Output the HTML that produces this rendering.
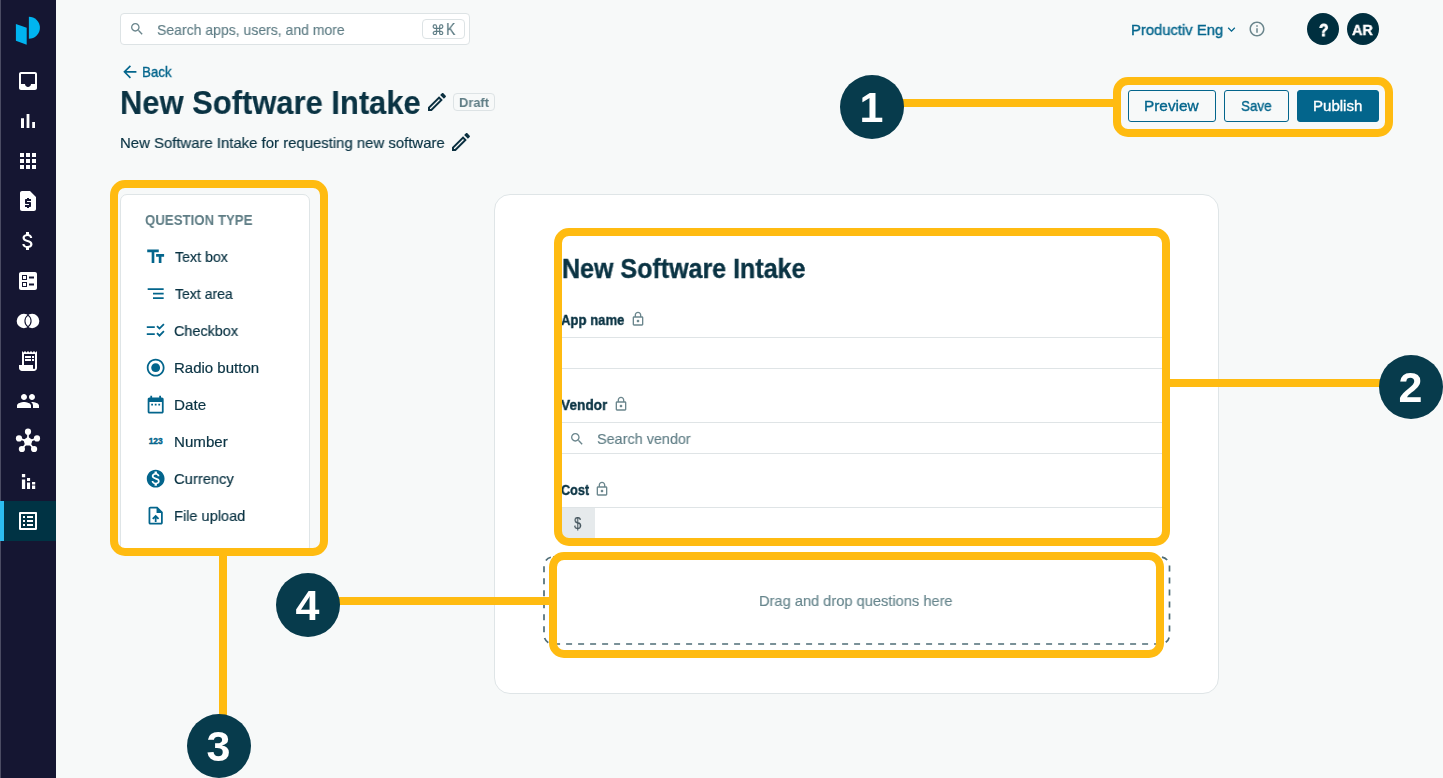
<!DOCTYPE html>
<html lang="en">
<head>
<meta charset="utf-8">
<title>New Software Intake</title>
<style>
*{box-sizing:border-box;margin:0;padding:0}
html,body{width:1443px;height:778px;overflow:hidden}
body{background:#f7f9f9;font-family:"Liberation Sans","DejaVu Sans",sans-serif;color:#0b3040;position:relative}
.abs{position:absolute}
svg{display:block}
/* sidebar */
#side{position:absolute;left:0;top:0;width:56px;height:778px;background:#151632}
#side .edge{position:absolute;left:0;top:0;width:1px;height:778px;background:#4b4c63}
#side .active{position:absolute;left:0;top:501px;width:56px;height:40px;background:#003344}
#side .active i{position:absolute;left:0;top:0;width:4px;height:40px;background:#2cbdf0}
#side svg{position:absolute;left:16px;width:24px;height:24px;fill:#fff}
/* text */
.t{position:absolute;white-space:nowrap;line-height:1;transform-origin:0 0;will-change:transform}
/* yellow */
.yb{position:absolute;border:8px solid #ffbb11;border-radius:15px}
.yl{position:absolute;background:#ffbb11}
.num{position:absolute;width:64px;height:64px;border-radius:50%;background:#073b4c;color:#fff;font-weight:bold;font-size:43px;text-align:center;line-height:64.5px;text-indent:-1px;will-change:transform}
.btn{position:absolute;top:90px;height:32px;border:1px solid #03658c;border-radius:3px;background:transparent;color:#03658c;font-size:15px;text-align:center;line-height:30px}
.qi{position:absolute;left:144.7px;width:21.33px;height:21.33px;fill:#03658c}
.ql{position:absolute;left:174px;font-size:15px;color:#0b3040;white-space:nowrap;line-height:1}
.lbl{position:absolute;left:561px;font-size:14px;font-weight:bold;color:#0b3040;white-space:nowrap;line-height:1}
.inp{position:absolute;left:561px;width:604px;height:32px;border:1px solid #dfe4e6;background:#fff}
.lock{position:absolute;width:16px;height:16px;fill:#6b868d}
</style>
</head>
<body>

<!-- SIDEBAR -->
<div id="side">
  <div class="edge"></div>
  <div class="active"><i></i></div>
  <svg viewBox="0 0 56 56" style="left:0;top:0;width:56px;height:56px;fill:#00b4f0"><path d="M15.900 24L26.700 27.800V44.800L15.900 40.800z"/><path d="M28.900 16.800A11 11 0 0 1 28.900 38.800z"/></svg>
  <svg viewBox="0 0 24 24" style="top:69px"><path d="M19 3H4.99c-1.11 0-1.98.89-1.98 2L3 19c0 1.1.88 2 1.99 2H19c1.1 0 2-.9 2-2V5c0-1.11-.9-2-2-2zm0 12h-4c0 1.66-1.35 3-3 3s-3-1.34-3-3H4.99V5H19v10z"/></svg>
  <svg viewBox="0 0 24 24" style="top:109px"><path d="M5 9.2h3V19H5zM10.6 5h2.8v14h-2.8zm5.6 8H19v6h-2.8z"/></svg>
  <svg viewBox="0 0 24 24" style="top:149px"><path d="M4 8h4V4H4v4zm6 12h4v-4h-4v4zm-6 0h4v-4H4v4zm0-6h4v-4H4v4zm6 0h4v-4h-4v4zm6-10v4h4V4h-4zm-6 4h4V4h-4v4zm6 6h4v-4h-4v4zm0 6h4v-4h-4v4z"/></svg>
  <svg viewBox="0 0 24 24" style="top:189px"><path d="M14 2H6c-1.1 0-2 .9-2 2v16c0 1.1.9 2 2 2h12c1.1 0 2-.9 2-2V8l-6-6zm1 10h-4v1h3c.55 0 1 .45 1 1v3c0 .55-.45 1-1 1h-1v1h-2v-1H9v-2h4v-1h-3c-.55 0-1-.45-1-1v-3c0-.55.45-1 1-1h1V9h2v1h2v2z"/></svg>
  <svg viewBox="0 0 24 24" style="top:229px"><path d="M11.8 10.9c-2.27-.59-3-1.2-3-2.15 0-1.09 1.01-1.85 2.7-1.85 1.78 0 2.44.85 2.5 2.1h2.21c-.07-1.72-1.12-3.3-3.21-3.81V3h-3v2.16c-1.94.42-3.5 1.68-3.5 3.61 0 2.31 1.91 3.46 4.7 4.13 2.5.6 3 1.48 3 2.41 0 .69-.49 1.79-2.7 1.79-2.06 0-2.87-.92-2.98-2.1h-2.2c.12 2.19 1.76 3.42 3.68 3.83V21h3v-2.15c1.95-.37 3.5-1.5 3.5-3.55 0-2.84-2.43-3.81-4.7-4.4z"/></svg>
  <svg viewBox="0 0 24 24" style="top:269px"><path fill-rule="evenodd" d="M13 9.5h5v-2h-5v2zm0 7h5v-2h-5v2zm6 4.500H5c-1.1 0-2-.9-2-2V5c0-1.1.9-2 2-2h14c1.100 0 2 .9 2 2v14c0 1.100-.9 2-2 2zM6 11h5V6H6v5zm1-4h3v3H7V7zM6 18h5v-5H6v5zm1-4h3v3H7v-3z"/></svg>
  <svg viewBox="0 0 24 24" style="top:309px;overflow:visible"><circle cx="7.900" cy="12" r="7.200"/><circle cx="16.100" cy="12" r="7.200"/><path d="M12 6.100a7.200 7.200 0 0 1 0 11.800a7.200 7.200 0 0 1 0-11.800z" fill="#fff" stroke="#151632" stroke-width="1.100"/></svg>
  <svg viewBox="0 0 24 24" style="top:349px;overflow:visible"><path fill-rule="evenodd" d="M19.500 3.500L18 2l-1.500 1.500L15 2l-1.500 1.500L12 2l-1.500 1.500L9 2 7.500 3.500 6 2v14H3v3c0 1.660 1.340 3 3 3h12c1.660 0 3-1.340 3-3V2l-1.500 1.500zM19 19c0 .550-.450 1-1 1s-1-.450-1-1v-3H8V5h11v14zM9 7h6v2H9zM16 7h2v2h-2zM9 10h6v2H9zM16 10h2v2h-2z"/></svg>
  <svg viewBox="0 0 24 24" style="top:389px"><path d="M16 11c1.660 0 2.990-1.340 2.990-3S17.660 5 16 5c-1.660 0-3 1.340-3 3s1.340 3 3 3zm-8 0c1.660 0 2.990-1.340 2.990-3S9.660 5 8 5C6.340 5 5 6.340 5 8s1.340 3 3 3zm0 2c-2.330 0-7 1.170-7 3.500V19h14v-2.500c0-2.330-4.670-3.500-7-3.500zm8 0c-.29 0-.62.020-.97.050 1.160.840 1.970 1.970 1.970 3.450V19h6v-2.500c0-2.330-4.670-3.500-7-3.500z"/></svg>
  <svg viewBox="0 0 24 24" style="top:429px;overflow:visible"><path d="M12 12.500V2.700M12 12.500L3 9.400M12 12.500l9-3.100M12 12.500L5.900 20M12 12.500l5.900 7.500" stroke="#fff" stroke-width="1.700" fill="none"/><path d="M12 7.700l4.600 3.300-1.800 5.400H9.200L7.400 11z"/><circle cx="12" cy="2.700" r="3.100"/><circle cx="3" cy="9.400" r="3.100"/><circle cx="21" cy="9.400" r="3.100"/><circle cx="5.900" cy="20" r="3.100"/><circle cx="18.100" cy="20" r="3.100"/></svg>
  <svg viewBox="0 0 24 24" style="top:469px;overflow:visible"><path d="M5.900 5h3.300v3.300H5.900zM5.900 10.600h3.300V20H5.900zM11 9h3.100v3H11zM11 13.400h3.100V20H11zM16 13h3.200v2.500H16zM16 16.600h3.200V20H16z"/></svg>
  <svg viewBox="0 0 24 24" style="top:509px"><path d="M19 5v14H5V5h14m1.100-2H3.900c-.5 0-.9.400-.9.900v16.200c0 .4.400.9.900.9h16.200c.4 0 .9-.5.900-.9V3.900c0-.5-.5-.9-.9-.9zM11 7h6v2h-6V7zm0 4h6v2h-6v-2zm0 4h6v2h-6zM7 7h2v2H7zm0 4h2v2H7zm0 4h2v2H7z"/></svg>
</div>

<!-- TOP BAR -->
<div class="abs" style="left:120px;top:13px;width:350px;height:32px;border:1px solid #dde3e5;border-radius:4px;background:#fff"></div>
<div class="abs" style="left:422px;top:19px;width:43px;height:20px;border:1px solid #dde3e5;border-radius:4px;background:#fff"></div>

<div class="abs" style="left:1307px;top:13px;width:32px;height:32px;border-radius:50%;background:#002f3f"></div>
<div class="abs" style="left:1347px;top:13px;width:32px;height:32px;border-radius:50%;background:#002f3f"></div>

<!-- HEADER -->
<div class="abs" style="left:453px;top:93px;width:42px;height:18px;border:1px solid #dde3e5;border-radius:4px"></div>

<!-- BUTTONS -->
<div class="btn" style="left:1128px;width:88px"></div>
<div class="btn" style="left:1224px;width:65px"></div>
<div class="btn" style="left:1297px;width:82px;background:#03658c;color:#fff"></div>

<!-- QUESTION TYPE CARD -->
<div class="abs" style="left:120px;top:194px;width:190px;height:360px;border:1px solid #dfe5e7;border-radius:7px;background:#fff"></div>

<svg class="qi" viewBox="0 0 24 24" style="top:246px"><path d="M2.500 4v3h5v12h3V7h5V4h-13zm19 5h-9v3h3v7h3v-7h3V9z"/></svg>
<svg class="qi" viewBox="0 0 24 24" style="top:283px"><path d="M9 18h12v-2H9v2zM3 6v2h18V6H3zm6 7h12v-2H9v2z"/></svg>
<svg class="qi" viewBox="0 0 24 24" style="top:320px"><path d="M11 7H2v2h9V7zm0 8H2v2h9v-2zm5.340-4L12.800 7.460l1.410-1.410 2.120 2.120 4.240-4.240L22 5.340 16.340 11zm0 8l-3.540-3.540 1.410-1.410 2.120 2.120 4.240-4.240L22 13.340 16.340 19z"/></svg>
<svg class="qi" viewBox="0 0 24 24" style="top:357px"><path d="M12 7c-2.760 0-5 2.240-5 5s2.240 5 5 5 5-2.240 5-5-2.240-5-5-5zm0-5C6.480 2 2 6.480 2 12s4.480 10 10 10 10-4.480 10-10S17.520 2 12 2zm0 18c-4.420 0-8-3.580-8-8s3.580-8 8-8 8 3.580 8 8-3.580 8-8 8z"/></svg>
<svg class="qi" viewBox="0 0 24 24" style="top:394px"><path d="M9 11H7v2h2v-2zm4 0h-2v2h2v-2zm4 0h-2v2h2v-2zm2-7h-1V2h-2v2H8V2H6v2H5c-1.110 0-1.990.9-1.990 2L3 20c0 1.100.89 2 2 2h14c1.100 0 2-.9 2-2V6c0-1.100-.9-2-2-2zm0 16H5V9h14v11z"/></svg>
<svg class="qi" viewBox="0 0 24 24" style="top:431px"><text x="4.100" y="15.100" font-family="Liberation Sans, sans-serif" font-weight="bold" font-size="9.300" stroke="#03658c" stroke-width="0.450" textLength="15.800" lengthAdjust="spacingAndGlyphs">123</text></svg>
<svg class="qi" viewBox="0 0 24 24" style="top:468px"><path d="M12 2C6.480 2 2 6.480 2 12s4.480 10 10 10 10-4.480 10-10S17.520 2 12 2zm1.410 16.090V20h-2.670v-1.930c-1.710-.36-3.160-1.460-3.270-3.400h1.960c.1 1.050.82 1.870 2.650 1.870 1.960 0 2.400-.98 2.400-1.590 0-.83-.44-1.610-2.670-2.140-2.480-.6-4.180-1.620-4.180-3.670 0-1.720 1.390-2.840 3.110-3.210V4h2.670v1.950c1.860.45 2.790 1.860 2.850 3.390H14.300c-.05-1.110-.64-1.870-2.220-1.870-1.500 0-2.400.68-2.400 1.640 0 .84.650 1.390 2.670 1.910s4.180 1.390 4.180 3.910c-.010 1.830-1.380 2.830-3.120 3.160z"/></svg>
<svg class="qi" viewBox="0 0 24 24" style="top:505px"><path d="M14 2H6c-1.100 0-1.990.9-1.990 2L4 20c0 1.100.89 2 1.990 2H18c1.100 0 2-.9 2-2V8l-6-6zm4 18H6V4h7v5h5v11zM8 15.010l1.410 1.410L11 14.840V19h2v-4.160l1.590 1.590L16 15.010 12.010 11z"/></svg>

<!-- MAIN CARD -->
<div class="abs" style="left:494px;top:194px;width:725px;height:500px;border:1px solid #dfe5e7;border-radius:16px;background:#fff"></div>
<div class="inp" style="top:337px"></div>
<div class="inp" style="top:422px"></div>
<div class="inp" style="top:507px"></div>
<div class="abs" style="left:562px;top:508px;width:33px;height:30px;background:#e6eaec"></div>

<!-- DROP ZONE -->
<svg class="abs" style="left:540px;top:550px;width:636px;height:100px" viewBox="0 0 636 100"><rect x="4" y="7" width="625.500" height="87" rx="9" ry="9" fill="none" stroke="#4f6d77" stroke-width="1.700" stroke-dasharray="6 6" stroke-dashoffset="3"/></svg>

<!-- TEXTS -->
<div class="t" style="left:157.00px;top:22.00px;font-size:15px;color:#5f7d85;transform:scaleX(0.9342);-webkit-text-stroke:0.15px #5f7d85">Search apps, users, and more</div>
<div class="t" style="left:431.00px;top:23.20px;font-size:14px;color:#5f7d85;transform:scaleX(1.0000);-webkit-text-stroke:0.15px #5f7d85">⌘</div>
<div class="t" style="left:446.22px;top:21.90px;font-size:16px;color:#5f7d85;transform:scaleX(0.8800);-webkit-text-stroke:0.15px #5f7d85">K</div>
<div class="t" style="left:1130.61px;top:22.10px;font-size:15px;color:#03658c;transform:scaleX(0.9865);-webkit-text-stroke:0.35px #03658c">Productiv Eng</div>
<div class="t" style="left:1318.90px;top:21.70px;font-size:17px;color:#fff;transform:scaleX(0.9100);font-weight:bold;-webkit-text-stroke:0.8px #fff">?</div>
<div class="t" style="left:1352.40px;top:22.00px;font-size:15.4px;color:#fff;transform:scaleX(0.9406);font-weight:bold;-webkit-text-stroke:0.4px #fff">AR</div>
<div class="t" style="left:141.81px;top:64.20px;font-size:15px;color:#03658c;transform:scaleX(0.8920);-webkit-text-stroke:0.35px #03658c">Back</div>
<div class="t" style="left:119.63px;top:86.00px;font-size:33px;color:#0a3343;transform:scaleX(0.9370);font-weight:bold;-webkit-text-stroke:0.15px #0a3343">New Software Intake</div>
<div class="t" style="left:458.70px;top:96.00px;font-size:13.4px;color:#5f7d85;transform:scaleX(0.9595);font-weight:bold">Draft</div>
<div class="t" style="left:120.31px;top:134.90px;font-size:15px;color:#0a3343;transform:scaleX(0.9933);-webkit-text-stroke:0.2px #0a3343">New Software Intake for requesting new software</div>
<div class="t" style="left:1143.98px;top:98.20px;font-size:15px;color:#03658c;transform:scaleX(1.0244);-webkit-text-stroke:0.35px #03658c">Preview</div>
<div class="t" style="left:1240.70px;top:98.20px;font-size:15px;color:#03658c;transform:scaleX(0.8982);-webkit-text-stroke:0.35px #03658c">Save</div>
<div class="t" style="left:1312.50px;top:98.20px;font-size:15px;color:#fff;transform:scaleX(1.0030);-webkit-text-stroke:0.35px #fff">Publish</div>
<div class="t" style="left:145.20px;top:213.30px;font-size:14.4px;color:#5f7d85;transform:scaleX(0.9202);font-weight:bold">QUESTION TYPE</div>
<div class="t" style="left:174.70px;top:248.50px;font-size:15px;color:#0a3343;transform:scaleX(0.9474);-webkit-text-stroke:0.2px #0a3343">Text box</div>
<div class="t" style="left:174.70px;top:285.50px;font-size:15px;color:#0a3343;transform:scaleX(0.9365);-webkit-text-stroke:0.2px #0a3343">Text area</div>
<div class="t" style="left:174.20px;top:322.50px;font-size:15px;color:#0a3343;transform:scaleX(0.9598);-webkit-text-stroke:0.2px #0a3343">Checkbox</div>
<div class="t" style="left:173.90px;top:359.50px;font-size:15px;color:#0a3343;transform:scaleX(0.9986);-webkit-text-stroke:0.2px #0a3343">Radio button</div>
<div class="t" style="left:173.88px;top:396.50px;font-size:15px;color:#0a3343;transform:scaleX(1.0151);-webkit-text-stroke:0.2px #0a3343">Date</div>
<div class="t" style="left:173.89px;top:433.50px;font-size:15px;color:#0a3343;transform:scaleX(1.0066);-webkit-text-stroke:0.2px #0a3343">Number</div>
<div class="t" style="left:174.40px;top:470.50px;font-size:15px;color:#0a3343;transform:scaleX(0.9845);-webkit-text-stroke:0.2px #0a3343">Currency</div>
<div class="t" style="left:173.93px;top:507.50px;font-size:15px;color:#0a3343;transform:scaleX(0.9717);-webkit-text-stroke:0.2px #0a3343">File upload</div>
<div class="t" style="left:561.67px;top:255.80px;font-size:26.8px;color:#0a3343;transform:scaleX(0.9339);font-weight:bold;-webkit-text-stroke:0.4px #0a3343">New Software Intake</div>
<div class="t" style="left:560.50px;top:312.00px;font-size:15.4px;color:#0a3343;transform:scaleX(0.8525);font-weight:bold;-webkit-text-stroke:0.4px #0a3343">App name</div>
<div class="t" style="left:560.50px;top:397.00px;font-size:15.4px;color:#0a3343;transform:scaleX(0.8873);font-weight:bold;-webkit-text-stroke:0.4px #0a3343">Vendor</div>
<div class="t" style="left:560.70px;top:481.60px;font-size:15.4px;color:#0a3343;transform:scaleX(0.8246);font-weight:bold;-webkit-text-stroke:0.4px #0a3343">Cost</div>
<div class="t" style="left:597.10px;top:430.80px;font-size:15px;color:#5f7d85;transform:scaleX(0.9604);-webkit-text-stroke:0.15px #5f7d85">Search vendor</div>
<div class="t" style="left:573.80px;top:514.80px;font-size:17px;color:#46565e;transform:scaleX(0.7600);-webkit-text-stroke:0.2px #46565e">$</div>
<div class="t" style="left:759.32px;top:592.80px;font-size:15px;color:#66858c;transform:scaleX(0.9755);-webkit-text-stroke:0.15px #66858c">Drag and drop questions here</div>

<!-- ICONS -->
<svg class="abs" viewBox="0 0 24 24" style="left:129px;top:21px;width:16px;height:16px;fill:#6b868d"><path d="M15.500 14h-.79l-.28-.27C15.410 12.590 16 11.110 16 9.500 16 5.910 13.090 3 9.500 3S3 5.910 3 9.500 5.910 16 9.500 16c1.610 0 3.090-.59 4.230-1.570l.27.280v.790l5 4.990L20.490 19l-4.990-5zm-6 0C7.010 14 5 11.990 5 9.500S7.010 5 9.500 5 14 7.010 14 9.500 11.990 14 9.500 14z"/></svg>
<svg class="abs" viewBox="0 0 24 24" style="left:1224px;top:21.5px;width:15px;height:15px;fill:#03658c"><path d="M16.590 8.590L12 13.170 7.410 8.590 6 10l6 6 6-6z"/></svg>
<svg class="abs" viewBox="0 0 24 24" style="left:1248px;top:20px;width:18px;height:18px;fill:#6b868d"><path d="M11 7h2v2h-2zm0 4h2v6h-2zm1-9C6.480 2 2 6.480 2 12s4.480 10 10 10 10-4.480 10-10S17.520 2 12 2zm0 18c-4.410 0-8-3.590-8-8s3.590-8 8-8 8 3.590 8 8-3.590 8-8 8z"/></svg>
<svg class="abs" viewBox="0 0 24 24" style="left:120px;top:62.4px;width:19.700px;height:19.700px;fill:#03658c"><path d="M20 11H7.830l5.590-5.590L12 4l-8 8 8 8 1.410-1.410L7.830 13H20v-2z"/></svg>
<svg class="abs" viewBox="0 0 24 24" style="left:425px;top:90px;width:24px;height:24px;fill:#0b3040"><path d="M14.060 9.020l.92.920L5.920 19H5v-.92l9.060-9.060M17.660 3c-.25 0-.51.100-.7.290l-1.830 1.830 3.750 3.750 1.830-1.830c.39-.39.39-1.020 0-1.410l-2.340-2.340c-.2-.2-.45-.29-.71-.29zm-3.600 3.190L3 17.250V21h3.750L17.810 9.940l-3.750-3.750z"/></svg>
<svg class="abs" viewBox="0 0 24 24" style="left:449px;top:130px;width:24px;height:24px;fill:#0b3040"><path d="M14.060 9.020l.92.920L5.920 19H5v-.92l9.060-9.060M17.660 3c-.25 0-.51.100-.7.290l-1.830 1.830 3.750 3.750 1.830-1.830c.39-.39.39-1.020 0-1.410l-2.340-2.340c-.2-.2-.45-.29-.71-.29zm-3.600 3.190L3 17.250V21h3.750L17.810 9.940l-3.750-3.750z"/></svg>
<svg class="abs" viewBox="0 0 24 24" style="left:630px;top:311px;width:16px;height:16px;fill:#6b868d"><path d="M18 8h-1V6c0-2.760-2.240-5-5-5S7 3.240 7 6v2H6c-1.100 0-2 .9-2 2v10c0 1.100.9 2 2 2h12c1.100 0 2-.9 2-2V10c0-1.100-.9-2-2-2zM9 6c0-1.660 1.340-3 3-3s3 1.340 3 3v2H9V6zm9 14H6V10h12v10zm-6-3c1.100 0 2-.9 2-2s-.9-2-2-2-2 .9-2 2 .9 2 2 2z"/></svg>
<svg class="abs" viewBox="0 0 24 24" style="left:613px;top:396px;width:16px;height:16px;fill:#6b868d"><path d="M18 8h-1V6c0-2.760-2.240-5-5-5S7 3.240 7 6v2H6c-1.100 0-2 .9-2 2v10c0 1.100.9 2 2 2h12c1.100 0 2-.9 2-2V10c0-1.100-.9-2-2-2zM9 6c0-1.660 1.340-3 3-3s3 1.340 3 3v2H9V6zm9 14H6V10h12v10zm-6-3c1.100 0 2-.9 2-2s-.9-2-2-2-2 .9-2 2 .9 2 2 2z"/></svg>
<svg class="abs" viewBox="0 0 24 24" style="left:594px;top:481px;width:16px;height:16px;fill:#6b868d"><path d="M18 8h-1V6c0-2.760-2.240-5-5-5S7 3.240 7 6v2H6c-1.100 0-2 .9-2 2v10c0 1.100.9 2 2 2h12c1.100 0 2-.9 2-2V10c0-1.100-.9-2-2-2zM9 6c0-1.660 1.340-3 3-3s3 1.340 3 3v2H9V6zm9 14H6V10h12v10zm-6-3c1.100 0 2-.9 2-2s-.9-2-2-2-2 .9-2 2 .9 2 2 2z"/></svg>
<svg class="abs" viewBox="0 0 24 24" style="left:569px;top:430.7px;width:16px;height:16px;fill:#6b868d"><path d="M15.500 14h-.79l-.28-.27C15.410 12.590 16 11.110 16 9.500 16 5.910 13.090 3 9.500 3S3 5.910 3 9.500 5.910 16 9.500 16c1.610 0 3.090-.59 4.230-1.570l.27.280v.790l5 4.990L20.490 19l-4.990-5zm-6 0C7.010 14 5 11.990 5 9.500S7.010 5 9.500 5 14 7.010 14 9.500 11.990 14 9.500 14z"/></svg>

<!-- ANNOTATIONS -->
<div class="yb" style="left:1113px;top:77px;width:280px;height:60px"></div>
<div class="yl" style="left:900px;top:99px;width:214px;height:8px"></div>
<div class="num" style="left:840px;top:75px">1</div>

<div class="yb" style="left:110px;top:180px;width:218px;height:376px"></div>
<div class="yl" style="left:219px;top:555px;width:8px;height:165px"></div>
<div class="num" style="left:187px;top:714px">3</div>

<div class="yb" style="left:554px;top:228px;width:616px;height:318px"></div>
<div class="yl" style="left:1169px;top:379px;width:215px;height:8px"></div>
<div class="num" style="left:1379px;top:355px">2</div>

<div class="yb" style="left:549px;top:552px;width:615px;height:106px"></div>
<div class="yl" style="left:335px;top:597px;width:215px;height:8px"></div>
<div class="num" style="left:276px;top:573px">4</div>

</body>
</html>
